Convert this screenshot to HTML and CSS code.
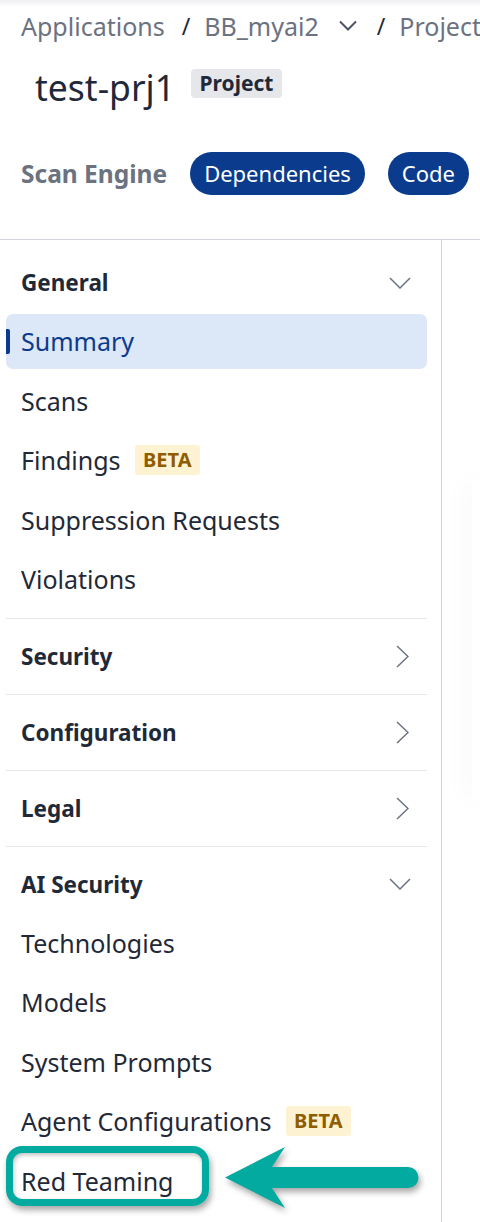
FILE: index.html
```html
<!DOCTYPE html>
<html lang="en">
<head>
<meta charset="utf-8">
<title>test-prj1</title>
<link rel="stylesheet" href="styles.css">
</head>
<body>
<div class="page">
  <header class="header">
    <nav class="crumbs">
      <span class="crumb">Applications</span>
      <span class="sep">/</span>
      <span class="crumb">BB_myai2</span>
      <svg class="crumb-chev" width="18" height="11" viewBox="0 0 18 11"><polyline points="1,1.5 9,9.5 17,1.5" fill="none" stroke="#4b5563" stroke-width="2"/></svg>
      <span class="sep">/</span>
      <span class="crumb">Project</span>
    </nav>
    <div class="title-row">
      <h1 class="title">test-prj1</h1>
      <span class="badge">Project</span>
    </div>
    <div class="engine-row">
      <span class="engine-label">Scan Engine</span>
      <span class="pill">Dependencies</span>
      <span class="pill">Code</span>
    </div>
  </header>
  <div class="body">
    <aside class="sidebar">
      <section class="section">
        <div class="sec-head"><span>General</span>
          <svg class="chev-down" width="22" height="12" viewBox="0 0 22 12"><polyline points="1,1 11,11 21,1" fill="none" stroke="#6b7280" stroke-width="1.5"/></svg>
        </div>
        <ul class="items">
          <li class="item active">Summary</li>
          <li class="item">Scans</li>
          <li class="item">Findings <span class="beta">BETA</span></li>
          <li class="item">Suppression Requests</li>
          <li class="item">Violations</li>
        </ul>
      </section>
      <section class="section">
        <div class="sec-head"><span>Security</span>
          <svg class="chev-right" width="13" height="23" viewBox="0 0 13 23"><polyline points="1,1 12,11.5 1,22" fill="none" stroke="#6b7280" stroke-width="1.5"/></svg>
        </div>
      </section>
      <section class="section">
        <div class="sec-head"><span>Configuration</span>
          <svg class="chev-right" width="13" height="23" viewBox="0 0 13 23"><polyline points="1,1 12,11.5 1,22" fill="none" stroke="#6b7280" stroke-width="1.5"/></svg>
        </div>
      </section>
      <section class="section">
        <div class="sec-head"><span>Legal</span>
          <svg class="chev-right" width="13" height="23" viewBox="0 0 13 23"><polyline points="1,1 12,11.5 1,22" fill="none" stroke="#6b7280" stroke-width="1.5"/></svg>
        </div>
      </section>
      <section class="section last">
        <div class="sec-head"><span>AI Security</span>
          <svg class="chev-down" width="22" height="12" viewBox="0 0 22 12"><polyline points="1,1 11,11 21,1" fill="none" stroke="#6b7280" stroke-width="1.5"/></svg>
        </div>
        <ul class="items">
          <li class="item">Technologies</li>
          <li class="item">Models</li>
          <li class="item">System Prompts</li>
          <li class="item">Agent Configurations <span class="beta">BETA</span></li>
          <li class="item marked">Red Teaming
            <span class="mark-box"></span>
            <svg class="mark-arrow" width="210" height="75" viewBox="0 0 210 75"><path d="M5 34.5 L65 4 L52 24 L188 24 A10.5 10.5 0 0 1 188 45 L52 45 L65 65 Z" fill="#03aaa0"/></svg>
          </li>
        </ul>
      </section>
    </aside>
    <main class="main">
      <div class="card"></div>
    </main>
  </div>
</div>
</body>
</html>
```
FILE: styles.css
```css
* { box-sizing: border-box; }
html, body { margin: 0; padding: 0; background: #fff; }
body {
  font-family: "Noto Sans", "Open Sans", sans-serif;
  color: #1f2937;
  width: 480px;
  height: 1222px;
  overflow: hidden;
}
.page {
  width: 480px;
  background: linear-gradient(#eeeff1 0, #fff 7px);
}
.header {
  padding: 9px 0 44px 21px;
}
.crumbs {
  display: flex;
  align-items: center;
  white-space: nowrap;
  font-size: 25px;
  line-height: 34px;
  color: #6b7280;
  overflow: hidden;
}
.crumb { flex: none; }
.sep { flex: none; color: #1f2937; margin: 0 14px 0 17px; font-size: 23px; }
.crumb-chev { flex: none; margin-left: 20px; margin-right: 3px; margin-top: -2px; }
.title-row {
  display: flex;
  align-items: center;
  margin-top: 20px;
  padding-left: 14px;
}
.title {
  margin: 0;
  font-size: 35.5px;
  line-height: 48px;
  font-weight: 400;
  color: #1f2937;
}
.badge {
  margin-left: 16px;
  margin-bottom: 7px;
  background: #e5e7eb;
  border-radius: 4px;
  font-size: 21px;
  font-weight: 700;
  line-height: 29px;
  padding: 0 8.5px;
  color: #1f2937;
}
.engine-row {
  display: flex;
  align-items: center;
  margin-top: 41px;
  white-space: nowrap;
}
.engine-label {
  font-size: 24.5px;
  font-weight: 700;
  color: #6b7280;
  margin-right: 23px;
}
.pill {
  background: #0b3b8c;
  color: #fff;
  font-size: 22px;
  line-height: 43px;
  height: 43px;
  padding: 0 14px;
  border-radius: 22px;
  margin-right: 23px;
}
.body {
  display: flex;
  border-top: 1px solid #d1d5db;
}
.sidebar {
  width: 442px;
  flex: none;
  border-right: 1px solid #d1d5db;
  padding: 5px 14px 20px 6px;
  height: 990px;
}
.section {
  padding: 6.5px 0;
  border-bottom: 1px solid #e5e7eb;
}
.section.last { border-bottom: none; }
.sec-head {
  height: 62px;
  display: flex;
  align-items: center;
  justify-content: space-between;
  padding: 0 16px 0 15px;
  font-size: 22.5px;
  font-weight: 700;
  color: #1f2937;
}
.chev-right { margin-right: 2px; }
.items {
  list-style: none;
  margin: 0;
  padding: 0;
}
.item {
  position: relative;
  height: 55.5px;
  margin-bottom: 4px;
  display: flex;
  align-items: center;
  padding-left: 15px;
  font-size: 25px;
  color: #1f2937;
  border-radius: 7px;
}
.item.active {
  background: #dce7f7;
  color: #0b3b8c;
}
.item.active::before {
  content: "";
  position: absolute;
  left: 0;
  top: 15px;
  width: 4px;
  height: 25px;
  background: #0b3b8c;
  border-radius: 0 2px 2px 0;
}
.beta {
  margin-left: 14px;
  background: #fdf3d2;
  color: #8f5c00;
  font-size: 20px;
  font-weight: 700;
  line-height: 30px;
  padding: 0 8.5px;
  border-radius: 3px;
}
.mark-box {
  position: absolute;
  left: 0;
  top: -7px;
  width: 203px;
  height: 60px;
  border: 7px solid #03aaa0;
  border-radius: 16px;
  box-shadow: 2px 4px 6px rgba(0, 0, 0, 0.35), inset 1px 2px 4px rgba(0, 0, 0, 0.25);
}
.mark-arrow {
  position: absolute;
  left: 214px;
  top: -10px;
  filter: drop-shadow(2px 4px 3px rgba(0, 0, 0, 0.35));
}
.main {
  flex: 1;
  padding-top: 240px;
}
.card {
  margin-left: 30px;
  height: 320px;
  background: #fff;
  border-radius: 12px;
  box-shadow: 0 0 30px rgba(0, 0, 0, 0.07);
}
```
